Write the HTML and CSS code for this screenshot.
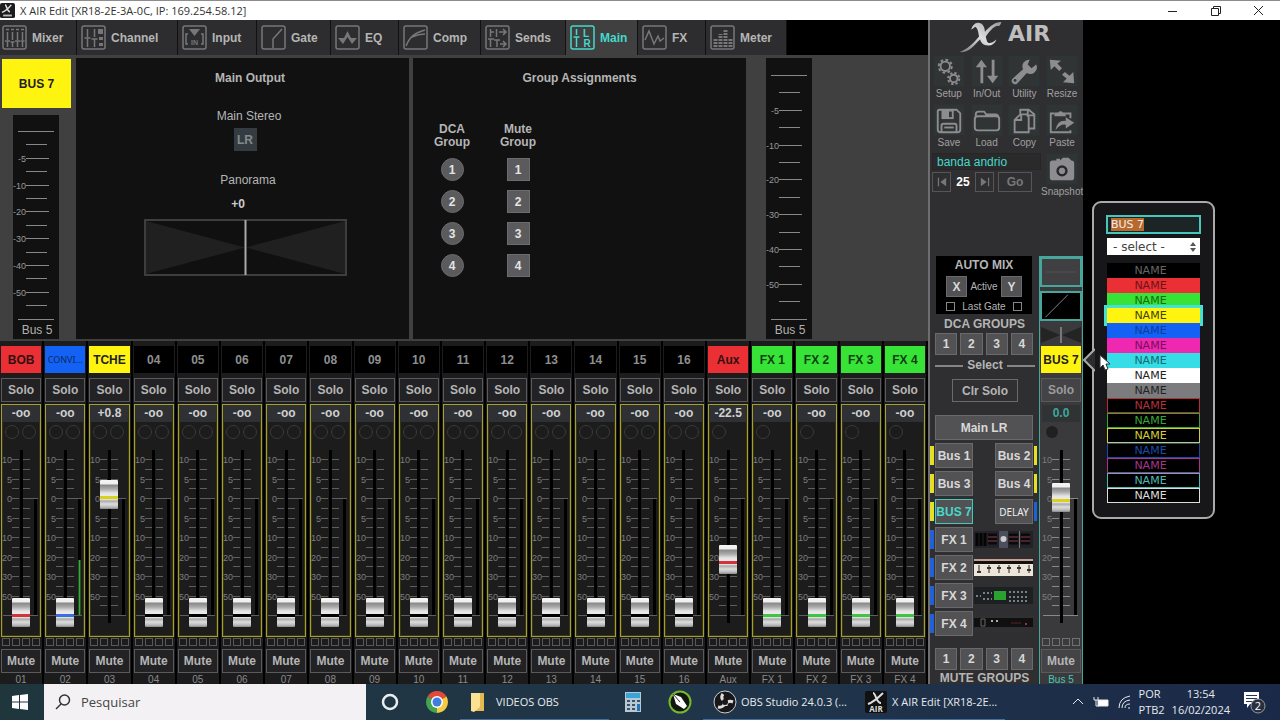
FILE: index.html
```html
<!DOCTYPE html>
<html lang="pt-BR">
<head>
  <meta charset="UTF-8">
  <meta name="viewport" content="width=device-width, initial-scale=1.0">
  <title>X AIR Edit</title>
  <link rel="stylesheet" href="styles.css">
</head>
<body>

  <header class="titlebar">
    <svg class="app-icon" viewBox="0 0 24 24"><rect width="24" height="24" rx="3" fill="#1c1c1e"/><path d="M3 15C9 13 14 8 18 3M8 3c3 0 3 11 8 11" stroke="#ddd" stroke-width="2.5" fill="none"/><path d="M5 20h14" stroke="#bbb" stroke-width="3"/></svg>
    <h1 class="title">X AIR Edit [XR18-2E-3A-0C, IP: 169.254.58.12]</h1>
    <div class="window-buttons">
      <button type="button" aria-label="Minimize"><svg viewBox="0 0 12 12"><path d="M1 6.500h9"/></svg></button>
      <button type="button" aria-label="Restore"><svg viewBox="0 0 12 12"><path d="M1.500 3.500h7v7h-7zM3.500 3.500v-2h7v7h-2"/></svg></button>
      <button type="button" aria-label="Close"><svg viewBox="0 0 12 12"><path d="M1 1l9 9M10 1l-9 9"/></svg></button>
    </div>
  </header>

  <main class="app">
    <section class="left">
      <nav class="tabs">
        <button type="button" class="tab"><svg viewBox="0 0 25 25"><rect x="1" y="1" width="23" height="23" rx="2"/><path d="M4 4.500h3M9 4.500h3M14 4.500h3M19 4.500h3M5.500 7v8M10.500 7v8M15.500 7v8M20.500 7v8M3 16h5M8.500 17h4M13 16h5M18.500 16h4M5.500 16v6M10.500 17v5M15.500 16v6M20.500 16v6"/></svg>Mixer</button>
        <button type="button" class="tab"><svg viewBox="0 0 25 25"><rect x="1" y="1" width="23" height="23" rx="2"/><path d="M6.500 4v8M13.500 4v8M3.500 13h6M10.500 14h6M6.500 13v9M13.500 14v8"/><path class="fill" d="M17 4h5v5h-5zM18 12h4v3h-4zM18 18h4v3h-4z"/></svg>Channel</button>
        <button type="button" class="tab"><svg viewBox="0 0 25 25"><rect x="1" y="1" width="23" height="23" rx="2"/><path class="fill" d="M7 4h11l-5.500 7z"/><path d="M6 9H4v10h2M19 9h2v10h-2"/><text x="12.500" y="20">IN</text></svg>Input</button>
        <button type="button" class="tab"><svg viewBox="0 0 25 25"><rect x="1" y="1" width="23" height="23" rx="2"/><path d="M12 23v-9l9-10"/></svg>Gate</button>
        <button type="button" class="tab"><svg viewBox="0 0 25 25"><rect x="1" y="1" width="23" height="23" rx="2"/><path class="fill" d="M3 13h6l3.500-7 3.500 7h6l-5 6-4.500-7L8 19z"/></svg>EQ</button>
        <button type="button" class="tab"><svg viewBox="0 0 25 25"><rect x="1" y="1" width="23" height="23" rx="2"/><path d="M3 21C7 11 12 8 22 5M9 12C13 10 17 9 22 9"/></svg>Comp</button>
        <button type="button" class="tab"><svg viewBox="0 0 25 25"><rect x="1" y="1" width="23" height="23" rx="2"/><path d="M5.500 4v8M11.500 4v8M3 14h6M9 15h6M5.500 14v8M12 15v7M6 7h3M14 7h7M18 4l3 3-3 3M15 19h6M18 16l3 3-3 3"/></svg>Sends</button>
        <button type="button" class="tab active"><svg viewBox="0 0 25 25"><rect x="1" y="1" width="23" height="23" rx="2"/><path d="M6.500 4v6M3.500 12h6M6.500 12v10"/><text class="big" x="16" y="12">L</text><text class="big" x="17" y="22">R</text></svg>Main</button>
        <button type="button" class="tab"><svg viewBox="0 0 25 25"><rect x="1" y="1" width="23" height="23" rx="2"/><path d="M3 15l4-9 5 13 4-8 2 5 4-3"/></svg>FX</button>
        <button type="button" class="tab"><svg viewBox="0 0 25 25"><rect x="1" y="1" width="23" height="23" rx="2"/><path d="M5.500 22V14M10.500 22V9M15.500 22V4M20.500 22V14" stroke-width="4" stroke-dasharray="2 1"/></svg>Meter</button>
      </nav>

      <div class="detail">
        <aside class="bus">
          <button type="button" class="bus-name">BUS 7</button>
          <div class="meter meter-left"></div>
        </aside>

        <section class="panel output">
          <h2>Main Output</h2>
          <p class="stereo">Main Stereo</p>
          <button type="button" class="lr">LR</button>
          <p class="pan-title">Panorama</p>
          <p class="pan-value">+0</p>
          <svg class="pan" viewBox="0 0 203 57"><rect class="pan-box" x="1" y="1" width="201" height="55"/><path fill="#202021" d="M2 2l99 26.500L2 55zM201 2l-99 26.500L201 55z"/><path d="M101.500 1v55" stroke="#aaa" stroke-width="2"/></svg>
        </section>

        <section class="panel assign">
          <h2>Group Assignments</h2>
          <div class="assign-columns">
            <div class="assign-column">
              <h3>DCA<br>Group</h3>
              <button type="button" class="round">1</button>
              <button type="button" class="round">2</button>
              <button type="button" class="round">3</button>
              <button type="button" class="round">4</button>
            </div>
            <div class="assign-column">
              <h3>Mute<br>Group</h3>
              <button type="button">1</button>
              <button type="button">2</button>
              <button type="button">3</button>
              <button type="button">4</button>
            </div>
          </div>
        </section>

        <div class="meter meter-right"></div>
      </div>

      <div class="strips" id="strips"></div>
    </section>

    <section class="side">
      <div class="logo">
        <svg viewBox="0 0 46 34" aria-label="X"><defs><linearGradient id="metal" x1="0" y1="1" x2="1" y2="0"><stop offset="0" stop-color="#777"/><stop offset=".5" stop-color="#ddd"/><stop offset="1" stop-color="#999"/></linearGradient></defs><path fill="url(#metal)" d="M1 32C9 29 15 23 21 16 20 9 19 7 17 6l-4 3c1-5 5-8 8-7 4 0 6 5 6 9 6-6 10-10 17-10-1 3-2 5-4 4-5 1-8 6-12 11 1 6 2 8 7 6l4-3c-2 5-6 7-10 6-4 0-6-3-7-6C16 25 10 33 1 32z"/></svg>
        <span>AIR</span>
      </div>

      <div class="tools">
        <button type="button" class="tool"><svg viewBox="0 0 32 32"><g fill="none"><circle cx="12" cy="11" r="5" stroke-width="2"/><circle cx="12" cy="11" r="7" stroke-width="2" stroke-dasharray="3 2.500"/><circle cx="21" cy="24" r="4" stroke-width="2"/><circle cx="21" cy="24" r="6" stroke-width="2" stroke-dasharray="2.500 2.210"/></g></svg>Setup</button>
        <button type="button" class="tool"><svg viewBox="0 0 32 32"><path stroke="none" d="M10 4l6 8h-4v17H9V12H4zM21 4h3v17h4l-6 8-6-8h5z"/></svg>In/Out</button>
        <button type="button" class="tool"><svg viewBox="0 0 32 32"><path stroke="none" d="M22 4a7 7 0 0 0-7 10L4 24a3 3 0 0 0 5 5l10-11a7 7 0 0 0 10-9l-5 4-4-4z"/><circle cx="6.500" cy="26" r="1.500" fill="#333" stroke="none"/></svg>Utility</button>
        <button type="button" class="tool"><svg viewBox="0 0 32 32"><path stroke="none" d="M3 4l12 1-4 3 5 5-3 3-5-5-4 4zM29 29l-12-1 4-4-5-4 3-3 5 4 4-4z"/></svg>Resize</button>
        <button type="button" class="tool"><svg viewBox="0 0 32 32"><path fill="none" stroke-width="2" d="M4 7q0-2 2-2h18l4 4v17q0 3-3 3H7q-3 0-3-3z"/><path fill="none" stroke-width="2" d="M8 29v-7q0-2 2-2h12q2 0 2 2v7"/><path stroke="none" d="M8 5h13v10H8z"/><path fill="#333" stroke="none" d="M16 7h3v6h-3z"/><path stroke-width="2" d="M11 24h10"/></svg>Save</button>
        <button type="button" class="tool"><svg viewBox="0 0 32 32"><path fill="none" stroke-width="2" d="M4 13V10q0-3 3-3h6l2 3h10q3 0 3 3M6 12h20q3 0 3 3v9q0 3-3 3H6q-3 0-3-3v-9q0-3 3-3z"/></svg>Load</button>
        <button type="button" class="tool"><svg viewBox="0 0 32 32"><path fill="none" stroke-width="2" d="M12 9V5h9l6 5v15h-6M6 16l6-6h7l2 3v16H6zM6 16h7v-6M20 5v6h7"/></svg>Copy</button>
        <button type="button" class="tool"><svg viewBox="0 0 32 32"><path fill="none" stroke-width="2" d="M25 27v2H4V9h4M20 9h5v5"/><path stroke="none" d="M8 12V8h4a3 3 0 0 1 5 0h3v4zM9 27q2-11 11-10v-4l9 6-9 6v-4q-6-1-11 6z"/></svg>Paste</button>
        <div class="scene">
          <input type="text" class="scene-name" aria-label="Scene name" value="banda andrio">
          <div class="scene-row">
            <button type="button" aria-label="Previous"><svg viewBox="0 0 12 12"><path d="M1 1h1.500v10H1zM11 1v10L4 6z"/></svg></button>
            <b>25</b>
            <button type="button" aria-label="Next"><svg viewBox="0 0 12 12"><path d="M9.500 1H11v10H9.500zM1 1l7 5-7 5z"/></svg></button>
            <button type="button" class="go">Go</button>
          </div>
        </div>
        <button type="button" class="tool"><svg viewBox="0 0 32 32"><path stroke="none" d="M3 10q0-3 3-3h4V5h4v2l3-3h6l3 3q3 0 3 3v15q0 3-3 3H6q-3 0-3-3z"/><circle cx="16" cy="18" r="6" fill="#26282a" stroke="none"/><circle cx="16" cy="18" r="3"/></svg>Snapshot</button>
      </div>

      <div class="lower">
        <div class="groups">
          <div class="automix">
            <h2>AUTO MIX</h2>
            <div class="automix-row">
              <button type="button">X</button><span>Active</span><button type="button">Y</button>
            </div>
            <div class="automix-row">
              <input type="checkbox" id="gateX" aria-label="Last gate X"><label for="gateX">Last Gate</label><input type="checkbox" aria-label="Last gate Y">
            </div>
          </div>
          <h2 class="groups-title">DCA GROUPS</h2>
          <div class="numbers"><button type="button">1</button><button type="button">2</button><button type="button">3</button><button type="button">4</button></div>
          <h2 class="select-line">Select</h2>
          <button type="button" class="clear">Clr Solo</button>
          <button type="button" class="main-lr">Main LR</button>
          <div class="sends">
            <i class="mark yellow"></i><button type="button">Bus 1</button><button type="button" class="second">Bus 2</button><i class="mark yellow"></i>
            <i class="mark yellow"></i><button type="button">Bus 3</button><button type="button" class="second">Bus 4</button><i class="mark yellow"></i>
            <i class="mark yellow"></i><button type="button" class="current">BUS 7</button><button type="button" class="second delay">DELAY</button><i class="mark blue"></i>
            <i class="mark blue"></i><button type="button">FX 1</button>
            <svg class="rack" viewBox="0 0 59 17"><rect width="59" height="17" fill="#222328"/><path d="M3 2v13M7 2v13M11 2v13" stroke="#050505" stroke-width="3"/><path d="M14 4h9M14 8h9M14 12h9M35 4h9M35 8h9M35 12h9M47 4h9M47 8h9M47 12h9" stroke="#0a0a0c" stroke-width="3"/><path d="M14 6h9M14 10h9M35 6h9M35 10h9M47 6h9M47 10h9" stroke="#7a3038"/><rect x="25" width="9" height="17" fill="#4c4e5c"/><circle cx="29.500" cy="8" r="3" fill="#ccc"/><path d="M45.500 0v17" stroke="#777"/></svg>
            <i class="mark blue"></i><button type="button">FX 2</button>
            <svg class="rack" viewBox="0 0 59 17"><rect width="59" height="17" fill="#ece5d9"/><path d="M0 1h59" stroke="#a45b48"/><rect y="2" width="59" height="3" fill="#111"/><path d="M5 6v8M15 6v8M25 6v8M35 6v8M45 6v8M55 6v8" stroke="#292522"/><path d="M3 13h4M13 9h4M23 9h4M33 9h4M43 9h4M53 11h4" stroke="#39332e" stroke-width="2"/></svg>
            <i class="mark blue"></i><button type="button">FX 3</button>
            <svg class="rack" viewBox="0 0 59 17"><rect width="59" height="17" fill="#1d2022"/><rect x="20" y="4" width="12" height="9" fill="#29a22f"/><path d="M2 9h5M9 6h9M9 12h9M35 5h20M35 10h20M35 14h20" stroke="#798083" stroke-width="2" stroke-dasharray="2 2"/></svg>
            <i class="mark blue"></i><button type="button">FX 4</button>
            <svg class="rack" viewBox="0 0 59 17"><rect width="59" height="17" fill="#303032"/><rect y="3" width="59" height="9" fill="#101011"/><path d="M7 4h4v7H7z" fill="none" stroke="#666"/><path d="M17 6h10" stroke="#aaa" stroke-width="2" stroke-dasharray="2 3"/><path d="M37 8h10" stroke="#5c2020"/><circle cx="52" cy="9" r="1" fill="#b44"/></svg>
          </div>
          <div class="numbers mutes"><button type="button">1</button><button type="button">2</button><button type="button">3</button><button type="button">4</button></div>
          <h2 class="mute-title">MUTE GROUPS</h2>
        </div>
        <div class="main-strip" id="mainStrip">
          <svg class="thumb eq" viewBox="0 0 42 30"><path d="M3 15h36" stroke="#555"/></svg>
          <svg class="thumb gate" viewBox="0 0 42 30"><path d="M3 28L29 2" stroke="#999"/></svg>
          <svg class="thumb-pan" viewBox="0 0 42 20"><path fill="#242425" d="M1 2l19 8L1 18zM41 2l-19 8 19 8z"/><path d="M21 2v16" stroke="#777" stroke-width="2"/></svg>
        </div>
      </div>
    </section>
  </main>

  <form class="popup" id="popup">
    <svg class="popup-arrow" viewBox="0 0 13 24"><path d="M13 1L2 12l11 11" fill="#2c2c2e" stroke="#aaa" stroke-width="2"/></svg>
    <input type="text" id="busName" aria-label="Bus name" value="BUS 7">
    <select aria-label="Preset name"><option>- select -</option></select>
    <div class="swatches" id="swatches"></div>
  </form>
  <svg class="cursor" viewBox="0 0 12 18"><path d="M1 1v13l3-3 2 5 3-1-2-5h4z" fill="#fff" stroke="#333"/></svg>

  <footer class="taskbar">
    <button type="button" class="start" aria-label="Start"><svg viewBox="0 0 16 16"><path fill="#fff" d="M0 2l7-1v6.500H0zM8 1l8-1v7.500H8zM0 8.500h7V15l-7-1zM8 8.500h8V16l-8-1z"/></svg></button>
    <label class="search"><svg viewBox="0 0 16 16"><circle cx="9.500" cy="6" r="5"/><path d="M6 10l-5 5"/></svg><input type="text" placeholder="Pesquisar"></label>
    <button type="button" class="task icon-task" aria-label="Cortana"><svg viewBox="0 0 24 24"><circle cx="12" cy="12" r="7" fill="none" stroke="#e8eef0" stroke-width="2.500"/></svg></button>
    <button type="button" class="task icon-task" aria-label="Chrome"><svg viewBox="0 0 24 24"><path fill="#e04a3d" d="M12 12L2.500 6.500a11 11 0 0 1 19 0z"/><path fill="#f7cb3f" d="M12 12l9.500-5.500A11 11 0 0 1 12 23z"/><path fill="#42a452" d="M12 12v11A11 11 0 0 1 2.500 6.500z"/><circle cx="12" cy="12" r="6" fill="#fff"/><circle cx="12" cy="12" r="4.500" fill="#3f7de0"/></svg></button>
    <button type="button" class="task open videos"><svg viewBox="0 0 24 24"><path fill="#e4b94f" d="M5 3h13v18H5z"/><path fill="#fbe192" d="M5 3h9v14l-6 5-3-1z"/></svg><span>VIDEOS OBS</span></button>
    <button type="button" class="task icon-task" aria-label="Calculator"><svg viewBox="0 0 24 24"><path fill="#b9c7d1" d="M4 2h16v20H4z"/><path fill="#38a4d8" d="M5 3h14v5H5z"/><path fill="#36536e" d="M6 10h3v2H6zM11 10h3v2h-3zM16 10h3v2h-3zM6 14h3v2H6zM11 14h3v2h-3zM6 18h3v2H6zM11 18h3v2h-3z"/><path fill="#2473b9" d="M16 14h3v7h-3z"/></svg></button>
    <button type="button" class="task icon-task" aria-label="CorelDRAW"><svg viewBox="0 0 24 24"><circle cx="12" cy="12" r="10.500" fill="#10180f" stroke="#78b82c" stroke-width="2"/><path fill="#fff" d="M5 4l8 3 6 9-3 3-8-5z"/><path d="M5 4l7 8" stroke="#333"/></svg></button>
    <button type="button" class="task open"><svg viewBox="0 0 24 24"><circle cx="12" cy="12" r="11" fill="#17171a" stroke="#ccc"/><path d="M10 4c-3 4 0 7 3 8M20 12c-5-2-7 1-7 4M5 17c5 1 7-2 6-6" fill="none" stroke="#ddd" stroke-width="3"/><circle cx="12" cy="12" r="3" fill="#17171a"/></svg><span>OBS Studio 24.0.3 (...</span></button>
    <button type="button" class="task open"><svg viewBox="0 0 24 24"><rect x="1" y="1" width="22" height="22" rx="2" fill="#111"/><path d="M4 14C10 12 15 7 19 3M9 3c3 0 3 10 8 10" stroke="#ddd" stroke-width="2" fill="none"/><text class="air" x="12" y="22">AIR</text></svg><span>X AIR Edit [XR18-2E...</span></button>
    <div class="tray">
      <svg viewBox="0 0 16 16"><path d="M3 10l5-5 5 5"/></svg>
      <svg viewBox="0 0 16 16"><path fill="#fff" d="M5 6h10v6H5z"/><path d="M1 3v3h4V3M3 6v6h3"/></svg>
      <svg viewBox="0 0 16 16"><path d="M3 14Q3 4 14 2M6 14q0-7 8-8M9 14q0-4 5-4M12 14h2"/></svg>
      <p class="lang">POR<br>PTB2</p>
      <p class="clock">13:54<br>16/02/2024</p>
      <svg class="notes" viewBox="0 0 28 28"><path fill="#fff" stroke="none" d="M4 4h15v12H10l-3 4v-4H4z"/><path stroke="#26365a" d="M6 7.500h11M6 10.500h11M6 13.500h8"/><circle cx="18" cy="18" r="7" fill="#28303f" stroke="#999"/><text x="18" y="22">2</text></svg>
    </div>
  </footer>

  <script src="script.js"></script>
</body>
</html>
```
FILE: styles.css
```css
* {
  box-sizing: border-box;
}

body {
  margin: 0;
  height: 100vh;
  display: flex;
  flex-direction: column;
  overflow: hidden;
  background-color: #000;
  color: #b5b5b5;
  font-family: "Liberation Sans", Arial, sans-serif;
  font-size: 12px;
}

h1, h2, h3, p {
  margin: 0;
}

h2, h3 {
  font-size: 12px;
  line-height: 13px;
}

button, input, select {
  font-family: inherit;
  font-size: 12px;
  color: inherit;
  margin: 0;
  padding: 0;
  border: none;
  border-radius: 0;
  background: none;
}

button {
  font-weight: bold;
  white-space: nowrap;
}

svg {
  display: block;
  flex: none;
}

/* window title */
.titlebar {
  height: 20px;
  flex: none;
  display: flex;
  align-items: center;
  gap: 5px;
  background-color: #fff;
  border-top: 1px solid #8c8c8c;
  color: #333;
}

.app-icon {
  width: 15px;
  height: 15px;
}

.title {
  flex: 1;
  font-family: "Open Sans", sans-serif;
  font-size: 11px;
  font-weight: normal;
}

.window-buttons {
  display: flex;
}

.window-buttons button {
  width: 43px;
  display: flex;
  justify-content: center;
}

.window-buttons svg {
  width: 12px;
  height: 12px;
  fill: none;
  stroke: #222;
}

.app {
  flex: 1;
  min-height: 0;
  display: grid;
  grid-template-columns: minmax(0, 1fr) 155px 197px;
}

.left {
  display: flex;
  flex-direction: column;
  min-height: 0;
  overflow: hidden;
  background-color: #404040;
}

/* tabs */
.tabs {
  flex: none;
  display: grid;
  grid-template-columns: 77px 101px 79px 74px 68px 82px 85px 72px 68px 81px;
  height: 35px;
  background-color: #000;
}

.tab {
  display: flex;
  align-items: center;
  gap: 5px;
  padding-left: 4px;
  background-color: #2d2d2f;
  border-right: 1px solid #111;
}

.tab:first-child {
  padding-left: 2px;
}

.tab svg {
  width: 25px;
  height: 25px;
  fill: none;
  stroke: #77777a;
  stroke-width: 1.5;
}

.tab .fill {
  fill: #77777a;
  stroke: none;
}

.tab text {
  fill: #77777a;
  stroke: none;
  font-size: 7px;
  text-anchor: middle;
}

.tab.active {
  background-color: #404040;
  color: #45d8cc;
}

.tab.active svg {
  stroke: #45d8cc;
}

.tab .big {
  fill: #45d8cc;
  font-size: 10px;
}

/* detail area */
.detail {
  flex: none;
  display: grid;
  grid-template-columns: 72px minmax(0, 1fr) minmax(0, 1fr) 178px;
  column-gap: 4px;
  height: 286px;
  padding: 3px 0 2px;
}

.bus {
  display: flex;
  flex-direction: column;
  gap: 7px;
  padding: 1px 0 0 2px;
}

.bus-name {
  height: 49px;
  width: 69px;
  background-color: #fff310;
  color: #222;
}

.meter {
  width: 46px;
  background-color: #111;
}

.meter-left {
  margin-left: 11px;
  flex: 1;
}

.meter-right {
  margin-left: 16px;
}

.meter svg {
  width: 46px;
  overflow: visible;
}

.meter path {
  stroke: #888;
  fill: none;
}

.meter text {
  fill: #999;
  font-size: 9px;
  text-anchor: end;
}

.meter .meter-name {
  font-size: 12px;
  text-anchor: middle;
  fill: #b0b0b0;
}

.panel {
  background-color: #111;
  padding-top: 14px;
}

.output {
  display: flex;
  flex-direction: column;
  align-items: center;
  padding-left: 5px;
}

.output h2 {
  padding-left: 10px;
}

.stereo {
  margin-top: 25px;
  padding-left: 8px;
  line-height: 13px;
}

.lr {
  width: 23px;
  height: 23px;
  margin-top: 5px;
  background-color: #343c42;
  color: #858a8d;
}

.pan-title {
  margin-top: 22px;
  padding-left: 6px;
  line-height: 14px;
}

.pan-value {
  margin-top: 10px;
  padding-right: 14px;
  line-height: 14px;
  font-weight: bold;
  color: #ccc;
}

.pan {
  width: 203px;
  height: 57px;
  margin-top: 8px;
}

.pan-box {
  fill: #101010;
  stroke: #3e3e3f;
  stroke-width: 2;
}

.assign h2 {
  text-align: center;
}

.assign-columns {
  display: flex;
  gap: 22px;
  margin-top: 38px;
  padding-left: 17px;
}

.assign-column {
  width: 44px;
  display: flex;
  flex-direction: column;
  align-items: center;
  gap: 9px;
  text-align: center;
}

.assign-column button {
  width: 23px;
  height: 23px;
  background-color: #5b5b5d;
  border: 1px solid #6c6c6e;
  color: #e4e4e4;
}

.assign-column .round {
  border-radius: 50%;
}

/* channel strips */
.strips {
  flex: 1;
  min-height: 0;
  display: grid;
  grid-template-columns: repeat(21, minmax(0, 1fr));
  background-color: #1c1c1d;
  overflow: hidden;
}

.strip {
  display: flex;
  flex-direction: column;
  padding: 5px 1px 0;
  border-right: 2px solid #000;
}

.name {
  height: 27px;
  background-color: #000;
  color: #8f8f90;
  overflow: hidden;
}

.name.red { background-color: #ea3034; color: #321011; }
.name.blue { background-color: #1362f4; color: #0a2a66; font-family: "Noto Sans", sans-serif; font-size: 9px; font-weight: normal; }
.name.yellow { background-color: #fff310; color: #222; }
.name.green { background-color: #36e336; color: #103f10; }

.solo, .mute {
  height: 24px;
  border: 1px solid #5a5a5c;
  background-color: #222224;
}

.solo {
  margin-top: 5px;
}

.channel {
  display: flex;
  flex-direction: column;
  align-items: center;
  height: 233px;
  margin-top: 2px;
  border: 1px solid #a5a02e;
  box-shadow: inset 0 0 0 1px #36350f;
}

.value {
  width: 100%;
  height: 17px;
  background-color: #2e3033;
  color: #d0d0d0;
  font-weight: bold;
  line-height: 17px;
  text-align: center;
}

.circles {
  display: flex;
  align-self: stretch;
  align-items: center;
  gap: 3px;
  height: 20px;
  padding-left: 3px;
}

.circles i {
  width: 14px;
  height: 14px;
  border: 1px solid #3a3a3b;
  border-radius: 50%;
}

/* scale and slider share one cell */
.fader {
  display: grid;
  width: 38px;
  height: 177px;
  margin-top: 8px;
}

.fader svg, .fader input {
  grid-area: 1 / 1;
}

.fader svg {
  width: 38px;
  height: 177px;
}

.fader path {
  stroke: #5e5e5f;
  fill: none;
}

.fader .level {
  stroke: #000;
  stroke-width: 3;
}

.fader .signal {
  stroke: #38a83e;
  stroke-width: 2;
}

.fader text {
  fill: #7d7d7e;
  font-size: 9px;
  text-anchor: end;
}

.fader input {
  appearance: none;
  writing-mode: vertical-lr;
  direction: rtl;
  width: 18px;
  height: 177px;
  justify-self: center;
  background: linear-gradient(#000, #000) center top / 3px 173px no-repeat;
}

.fader input::-webkit-slider-thumb {
  appearance: none;
  width: 18px;
  height: 29px;
  border: none;
  border-radius: 1px;
  background:
    linear-gradient(var(--line), var(--line)) 0 16px / 18px 3px no-repeat,
    linear-gradient(#f4f4f4 0, #eee 4px, #888 5px, #aaa 9px, #e4e4e4 13px, #f0f0f0 19px, #aaa 21px, #ddd 24px, #bbb 27px, #888 29px);
}

.line-red { --line: #d2333b; }
.line-blue { --line: #3a6fe0; }
.line-yellow { --line: #d8d21c; }
.line-black { --line: #000; }
.line-green { --line: #3fc443; }

.squares {
  display: flex;
  justify-content: space-between;
  margin-top: 1px;
  padding: 0 1px;
}

.squares i {
  width: 8px;
  height: 8px;
  border: 1px solid #58585a;
}

.mute {
  margin-top: 3px;
}

.number {
  margin-top: 2px;
  line-height: 10px;
  font-size: 10px;
  text-align: center;
  color: #8a8a8b;
}

/* side panel */
.side {
  display: flex;
  flex-direction: column;
  min-height: 0;
  overflow: hidden;
  background-color: #2f2f31;
  border-left: 2px solid #6e6e71;
}

.logo {
  flex: none;
  height: 35px;
  display: flex;
  gap: 4px;
  padding: 1px 0 0 28px;
}

.logo svg {
  width: 46px;
  height: 33px;
}

.logo span {
  font-family: "DejaVu Sans", sans-serif;
  font-size: 22px;
  font-weight: bold;
  line-height: 26px;
  color: #bebebe;
}

.tools {
  flex: none;
  display: grid;
  grid-template-columns: repeat(4, minmax(0, 1fr));
  grid-auto-rows: 49px;
  height: 201px;
  padding: 0 2px 0 0;
}

.tool {
  display: flex;
  flex-direction: column;
  align-items: center;
  gap: 1px;
  font-size: 10px;
  font-weight: normal;
  color: #a0a0a1;
}

.tool svg {
  width: 32px;
  height: 32px;
  background-color: #303435;
  border: 1px solid #283334;
  fill: #8d8d91;
  stroke: #8d8d91;
}

.scene {
  grid-column: span 3;
}

.scene-name {
  display: block;
  width: 109px;
  height: 17px;
  margin-left: 2px;
  padding-left: 4px;
  border: 1px solid #262627;
  background-color: #2a2a2b;
  color: #45d8cc;
}

.scene-row {
  display: flex;
  align-items: center;
  gap: 4px;
  margin: 2px 0 0 2px;
}

.scene-row button {
  width: 19px;
  height: 20px;
  display: flex;
  align-items: center;
  justify-content: center;
  border: 1px solid #565658;
  color: #77777a;
}

.scene-row svg {
  width: 10px;
  height: 10px;
  fill: #77777a;
}

.scene-row b {
  width: 16px;
  text-align: center;
  color: #fff;
}

.scene-row .go {
  width: 34px;
}

.lower {
  flex: 1;
  min-height: 0;
  display: grid;
  grid-template-columns: minmax(0, 1fr) 44px;
}

.groups {
  display: flex;
  flex-direction: column;
  text-align: center;
}

.groups button {
  border: 1px solid #6a6a6c;
  background-color: #525254;
  color: #d8d8d8;
}

.automix {
  height: 58px;
  margin: 0 7px 0 6px;
  padding-top: 3px;
  background-color: #000;
}

.automix-row {
  display: flex;
  align-items: center;
  justify-content: space-between;
  margin: 4px 10px 0;
  font-size: 10px;
}

.automix-row button {
  width: 21px;
  height: 21px;
}

.automix-row input {
  appearance: none;
  width: 9px;
  height: 9px;
  border: 1px solid #888;
}

.groups-title {
  margin-top: 4px;
}

.numbers {
  display: grid;
  grid-template-columns: repeat(4, 1fr);
  gap: 3px;
  margin: 2px 6px 0 5px;
}

.numbers button {
  height: 22px;
}

.select-line {
  display: flex;
  align-items: center;
  gap: 4px;
  margin: 4px 4px 0 5px;
}

.select-line::before, .select-line::after {
  content: "";
  flex: 1;
  height: 2px;
  background-color: #858586;
}

.groups .clear {
  width: 66px;
  height: 23px;
  margin: 7px 0 0 22px;
  background-color: #303032;
  color: #b5b5b5;
}

.groups .main-lr {
  height: 25px;
  margin: 13px 6px 0 5px;
}

.sends {
  display: grid;
  grid-template-columns: 4px 38px minmax(0, 1fr) 3px;
  grid-auto-rows: 25px;
  gap: 3px 1px;
  align-items: center;
  margin: 3px 2px 0 0;
}

.sends button {
  height: 25px;
}

.sends .second {
  width: 38px;
  justify-self: end;
}

.groups .current {
  border-color: #45c8bb;
  color: #45d8cc;
}

.groups .delay {
  font-family: "Noto Sans", sans-serif;
  font-size: 10px;
  font-weight: normal;
  color: #eee;
}

.mark {
  height: 19px;
}

.mark.yellow { background-color: #e6df28; }
.mark.blue { background-color: #2160d6; }

.rack {
  grid-column: 3 / 5;
  width: 59px;
  height: 17px;
}

.mutes {
  margin-top: 12px;
}

.mute-title {
  margin-top: 3px;
  line-height: 11px;
}

.main-strip {
  display: flex;
  flex-direction: column;
  background-color: #3a3a3c;
  border: 1px solid #47a69c;
  border-bottom: none;
}

.thumb {
  width: 42px;
  height: 30px;
  border: 2px solid #47a69c;
  margin-bottom: 4px;
}

.thumb.eq { background-color: #404042; }
.thumb.gate { background-color: #000; }

.thumb-pan {
  width: 42px;
  height: 20px;
}

.main-strip .strip {
  padding-top: 1px;
  border-right: none;
}

.main-strip .solo, .main-strip .mute {
  background-color: #444446;
  color: #9b9b9c;
}

.main-strip .mute {
  color: #b5b5b5;
}

.main-strip .channel {
  border-color: transparent;
  box-shadow: none;
}

.main-strip .value {
  background-color: #303334;
  color: #3fa79d;
}

.main-strip .circles {
  padding-left: 4px;
}

.main-strip .circles i {
  width: 12px;
  height: 12px;
  background-color: #202021;
  border: none;
}

.main-strip .fader path:not(.level) {
  stroke: #888;
}

.main-strip .squares i {
  border-color: #707072;
}

.main-strip .number {
  color: #45c8bb;
}

/* name and colour popup */
.popup {
  position: absolute;
  top: 201px;
  right: 65px;
  width: 123px;
  display: flex;
  flex-direction: column;
  padding: 12px 12px 14px;
  border: 2px solid #aaa;
  border-radius: 9px;
  background-color: #17171a;
  font-family: "DejaVu Sans", sans-serif;
}

.popup-arrow {
  position: absolute;
  left: -12px;
  top: 145px;
  width: 13px;
  height: 24px;
}

.popup > input {
  width: 95px;
  height: 19px;
  padding-left: 3px;
  border: 2px solid #45c8bb;
  background-color: #1d2426;
  color: #ddd;
  font-size: 11px;
  outline: none;
}

.popup > input::selection {
  background-color: #b9692c;
  color: #eee;
}

.popup select {
  appearance: none;
  width: 93px;
  height: 17px;
  margin: 4px 0 8px 1px;
  padding-left: 6px;
  color: #444;
  font-size: 12px;
  background: #fff url("data:image/svg+xml,%3Csvg xmlns='http://www.w3.org/2000/svg' width='7' height='10'%3E%3Cpath fill='%23555' d='M0 4l3-4 3 4zM0 6h6l-3 4z'/%3E%3C/svg%3E") right 3px center no-repeat;
}

.swatches {
  display: flex;
  flex-direction: column;
  padding: 0 1px;
}

.swatches button {
  height: 15px;
  line-height: 13px;
  padding-right: 6px;
  border: 1px solid currentColor;
  background-color: #000;
  font-size: 11px;
  font-weight: normal;
}

.swatches .solid {
  border: none;
  line-height: 15px;
  color: #222;
}

.swatches .picked {
  outline: 3px solid #45e0d4;
}

.s-off.solid { color: #666; }
.s-red { color: #b5313a; }
.s-green { color: #36a73a; }
.s-yellow { color: #d4ce36; }
.s-blue { color: #1e4aa8; }
.s-pink { color: #a8358c; }
.s-cyan { color: #4fb9b4; }
.s-white { color: #ddd; }
.s-red.solid { background-color: #ea3034; color: #6a1518; }
.s-green.solid { background-color: #36e336; color: #156a15; }
.s-yellow.solid { background-color: #fff310; color: #44400a; }
.s-blue.solid { background-color: #1362f4; color: #0d3c9a; }
.s-pink.solid { background-color: #ef28b2; color: #741257; }
.s-cyan.solid { background-color: #36dce6; color: #156a70; }
.s-white.solid { background-color: #fff; }
.s-grey.solid { background-color: #7c7c7e; }

.cursor {
  position: absolute;
  top: 354px;
  right: 169px;
  width: 12px;
  height: 18px;
}

/* windows taskbar */
.taskbar {
  flex: none;
  height: 36px;
  display: flex;
  position: relative;
  background: linear-gradient(to right, #20363d, #20354a 60%, #1b2948);
  color: #e6eaee;
  font-family: "Open Sans", sans-serif;
}

.start {
  width: 44px;
  padding-left: 12px;
}

.start svg {
  width: 16px;
  height: 16px;
}

.search {
  flex: none;
  width: 322px;
  display: flex;
  align-items: center;
  gap: 10px;
  padding-left: 11px;
  background-color: #f3f1f4;
}

.search svg {
  width: 16px;
  height: 16px;
  fill: none;
  stroke: #333;
  stroke-width: 1.5;
}

.search input {
  width: 200px;
  font-size: 13px;
}

.search input::placeholder {
  color: #444;
}

.task {
  flex: none;
  width: 151px;
  display: flex;
  align-items: center;
  gap: 4px;
  padding-left: 10px;
  font-size: 11px;
  font-weight: normal;
  border-bottom: 1px solid transparent;
}

.task svg {
  width: 24px;
  height: 24px;
}

.task.open {
  border-bottom-color: #446da0;
}

.icon-task {
  width: 47px;
  padding: 0 0 0 12px;
}

.videos {
  width: 149px;
  gap: 6px;
  padding-left: 6px;
}

.air {
  fill: #ddd;
  font-size: 8px;
  font-weight: bold;
  text-anchor: middle;
}

.tray {
  display: flex;
  align-items: center;
  gap: 7px;
  margin-left: auto;
  padding-right: 12px;
  font-size: 11px;
  line-height: 16px;
}

.tray svg {
  width: 16px;
  height: 16px;
  fill: none;
  stroke: #e6eaee;
}

.tray .clock {
  text-align: center;
}

.tray .notes {
  width: 28px;
  height: 28px;
  margin-left: 3px;
}

.notes text {
  fill: #fff;
  stroke: none;
  font-size: 11px;
  text-anchor: middle;
}
```
FILE: script.js
```js
var faderLabels = ['10', '5', '0', '5', '10', '20', '30', '50'];

// 148px of travel, position is a percentage from the bottom
var channels = [
  { name: 'BOB', color: 'red', line: 'red', label: '01' },
  { name: 'CONVI...', color: 'blue', line: 'blue', label: '02', signal: 55 },
  { name: 'TCHE', color: 'yellow', line: 'yellow', label: '03', value: '+0.8', position: 80 }
];

for (var n = 4; n <= 16; n++) {
  var number = (n < 10 ? '0' : '') + n;
  channels.push({ name: number, color: '', line: 'black', label: number });
}

channels.push({ name: 'Aux', color: 'red', line: 'red', label: 'Aux', value: '-22.5', position: 36, circles: 1 });
for (var fx = 1; fx <= 4; fx++) {
  channels.push({ name: 'FX ' + fx, color: 'green', line: 'green', label: 'FX ' + fx, circles: 1 });
}

function faderScale(channel) {
  var lines = '';
  var labels = '';
  for (var i = 0; i < 16; i++) {
    var y = Math.round(9 + i * 9.75) + 0.5;
    lines += 'M10 ' + y + 'h7M21 ' + y + 'h7';
    if (i % 2 === 0) {
      labels += '<text x="10" y="' + (y + 3) + '">' + faderLabels[i / 2] + '</text>';
    }
  }
  lines += 'M21 48.5h15M1 165.5h35';
  var signal = channel.signal ? '<path class="signal" d="M33.500 165v-' + channel.signal + '"/>' : '';
  return '<svg viewBox="0 0 38 177"><path class="level" d="M33.500 48v117"/><path d="' + lines + '"/>' + signal + labels + '</svg>';
}

function createStrip(channel) {
  var strip = document.createElement('div');
  strip.className = 'strip';
  strip.innerHTML =
    '<button type="button" class="name ' + channel.color + '">' + channel.name + '</button>' +
    '<button type="button" class="solo">Solo</button>' +
    '<div class="channel">' +
      '<div class="value">' + (channel.value || '-oo') + '</div>' +
      '<div class="circles">' + '<i></i>'.repeat(channel.circles || 2) + '</div>' +
      '<div class="fader">' + faderScale(channel) +
        '<input type="range" class="line-' + channel.line + '" min="0" max="100" value="' + (channel.position || 0) + '" aria-label="' + channel.name + ' level">' +
      '</div>' +
    '</div>' +
    '<div class="squares"><i></i><i></i><i></i><i></i></div>' +
    '<button type="button" class="mute">Mute</button>' +
    '<div class="number">' + channel.label + '</div>';
  return strip;
}

function drawMeter(element, top, step) {
  var names = { 2: '-5', 4: '-10', 6: '-20', 8: '-30', 10: '-40', 12: '-50' };
  var lines = '';
  var labels = '';
  for (var i = 0; i < 15; i++) {
    var y = Math.round(top + i * step) + 0.5;
    if (i === 0 || i === 14) {
      lines += 'M5 ' + y + 'h36';
    } else {
      lines += 'M13 ' + y + (names[i] ? 'h23' : 'h21');
    }
    if (names[i]) {
      labels += '<text x="13" y="' + (y + 3) + '">' + names[i] + '</text>';
    }
  }
  var height = Math.round(top + 14 * step) + 20;
  element.innerHTML = '<svg height="' + height + '" viewBox="0 0 46 ' + height + '"><path d="' + lines + '"/>' + labels +
    '<text class="meter-name" x="24" y="' + (height - 5) + '">Bus 5</text></svg>';
}

channels.forEach(function (channel) {
  document.getElementById('strips').appendChild(createStrip(channel));
});

document.getElementById('mainStrip').appendChild(createStrip({
  name: 'BUS 7', color: 'yellow', line: 'yellow', label: 'Bus 5', value: '0.0', position: 78, circles: 1
}));

drawMeter(document.querySelector('.meter-left'), 16, 13.4);
drawMeter(document.querySelector('.meter-right'), 17, 17.4);

var solid = ['off', 'red', 'green', 'yellow', 'blue', 'pink', 'cyan', 'white', 'grey'];
var outlined = ['red', 'green', 'yellow', 'blue', 'pink', 'cyan', 'white'];

function addSwatch(className) {
  var button = document.createElement('button');
  button.type = 'button';
  button.className = className;
  button.textContent = 'NAME';
  document.getElementById('swatches').appendChild(button);
}

solid.forEach(function (color) {
  addSwatch('solid s-' + color + (color === 'yellow' ? ' picked' : ''));
});
outlined.forEach(function (color) {
  addSwatch('s-' + color);
});

var busName = document.getElementById('busName');
busName.focus();
busName.select();
```
